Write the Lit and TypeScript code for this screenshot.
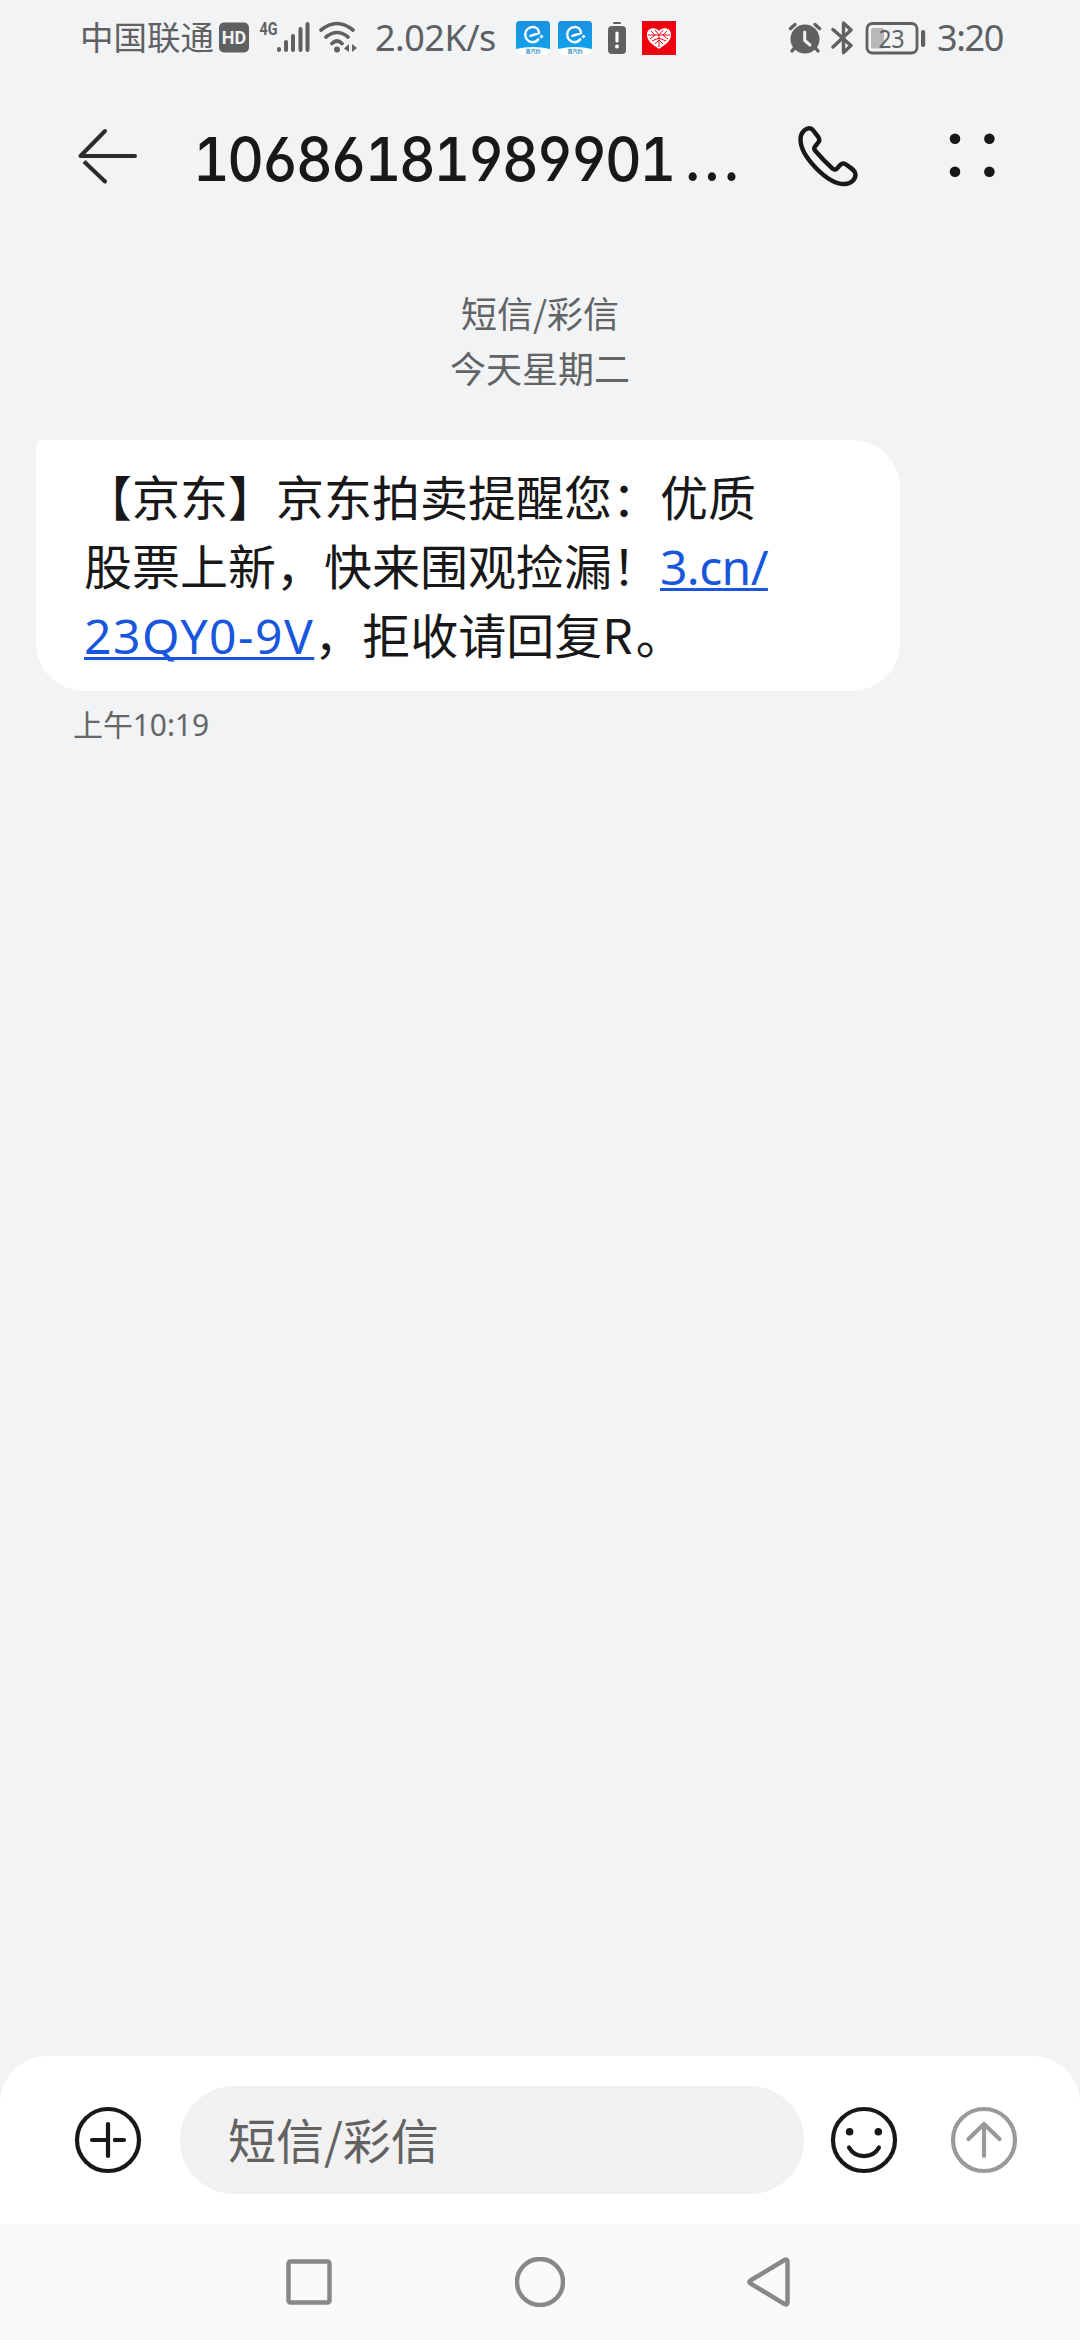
import { LitElement, html, svg, css } from "lit";
import { customElement, property } from "lit/decorators.js";

@customElement("status-bar")
class StatusBar extends LitElement {
  static styles = css`
    :host {
      display: flex;
      height: 75px;
      box-sizing: border-box;
      padding: 0 76px 2px 80px;
      align-items: center;
      color: #5f6062;
      font-family: "Noto Sans", "Noto Sans CJK SC", sans-serif;
    }
    svg { display: block; flex: none; margin-top: 2px; }
    .carrier { width: 136px; font: 400 33.5px/48px "Noto Sans CJK SC", sans-serif; white-space: nowrap; margin-top: -2px; }
    .hd { margin-left: 2px; }
    .signal { margin-left: 10px; }
    .wifi { margin-left: 8px; }
    .rate { margin-left: 17px; width: 125px; font-size: 36px; line-height: 48px; letter-spacing: -0.5px; white-space: nowrap; margin-top: 2px; }
    .app { margin-left: 16px; }
    .app + .app { margin-left: 8px; }
    .low { margin-left: 15px; }
    .heart { margin-left: 15px; }
    .right { display: flex; align-items: center; margin-left: auto; }
    .bt { margin-left: 9px; }
    .battery { margin-left: 11px; }
    .time { margin: 2px 0 0 11px; width: 67px; font-size: 36px; line-height: 48px; letter-spacing: -1.4px; white-space: nowrap; }
    .hdt { font: 700 18px "Roboto", sans-serif; fill: #f1f3f5; }
    .g4 { font: 700 18px "Roboto", sans-serif; fill: #5f6062; }
    .bat { font: 400 25px "Noto Sans", sans-serif; fill: #5f6062; }
    .apptext { font: 700 5px "Noto Sans CJK SC", sans-serif; fill: #2b8fc4; }
  `;
  private appIcon(id: string) {
    return html`<svg class="app" width="34" height="34" viewBox="0 0 34 34">
      <defs><linearGradient id=${id} x1="0" y1="0" x2="0" y2="1"><stop offset="0" stop-color="#1b8fe0" /><stop offset="1" stop-color="#0ca6ee" /></linearGradient></defs>
      <rect width="34" height="34" rx="3.500" fill="url(#${id})" />
      <path d="M0 28Q17 24 34 28V31Q34 34 31 34H3Q0 34 0 31Z" fill="#fff" />
      <path d="M14.500 14.800L23 12C23 8.200 20 6 16.800 6C12.300 6 9.200 9.500 9.200 13.500C9.200 18 12.500 21.200 16.500 21.200C19 21.200 21 20.200 22.300 18.300" fill="none" stroke="#fff" stroke-width="2.400" stroke-linecap="round" stroke-linejoin="round" />
      <path d="M25.500 13.500L27.500 15.500L25.500 17.500L23.500 15.500Z" fill="#fff" />
      <text class="apptext" x="17" y="31.900" text-anchor="middle">首汽约</text>
    </svg>`;
  }
  render() {
    return html`
      <span class="carrier">中国联通</span>
      <svg class="hd" width="31" height="31" viewBox="0 0 31 31">
        <rect x="1" y="0.500" width="30" height="30" rx="5" fill="#5f6062" />
        <text class="hdt" x="16" y="22" text-anchor="middle">HD</text>
      </svg>
      <svg class="signal" width="51" height="49" viewBox="259 12 51 49">
        <text class="g4" x="259.500" y="34" textLength="18" lengthAdjust="spacingAndGlyphs">4G</text>
        <path d="M279 48V49M286 41V49M293 35V49M300.500 28V49M307.500 23V49" stroke="#5f6062" stroke-width="4" stroke-linecap="round" />
      </svg>
      <svg class="wifi" width="40" height="33" viewBox="318 20 40 33">
        <g fill="none" stroke="#5f6062" stroke-width="3.600" stroke-linecap="round">
          <path d="M321 29Q337 16 353 29M326 36Q337 27 348 36M332 42.500Q337 37.500 342 42.500" />
        </g>
        <circle cx="337" cy="48.500" r="3" fill="#5f6062" />
        <path d="M349 43V51L344 47.500ZM352 43V51L357 47Z" fill="#5f6062" />
      </svg>
      <span class="rate">2.02K/s</span>
      ${this.appIcon("a1")}${this.appIcon("a2")}
      <svg class="low" width="20" height="34" viewBox="607 19 20 34">
        <rect x="613" y="20" width="8" height="2" rx="1" fill="#5f6062" />
        <rect x="608" y="24" width="18" height="28" rx="4" fill="#5f6062" />
        <path d="M617 31V39" stroke="#fff" stroke-width="3.200" stroke-linecap="round" />
        <circle cx="617" cy="44.500" r="2" fill="#fff" />
      </svg>
      <svg class="heart" width="34" height="34" viewBox="0 0 34 34">
        <rect width="34" height="34" fill="#ee0410" />
        <path d="M17 10C14 6 5 6 5 14C5 21 13 25 17 28C21 25 29 21 29 14C29 6 20 6 17 10Z" fill="#fff" />
        <path d="M9 10L13 14L8 18M13 9L17 14L21 9M25 10L21 14L26 18M10 20L17 17L24 20M13 23L17 19L21 23M17 14V26M6 14H28" fill="none" stroke="#ee0410" stroke-width="1" />
      </svg>
      <div class="right">
        <svg width="34" height="34" viewBox="787 19 34 34">
          <circle cx="804" cy="37" r="14.500" fill="#5f6062" />
          <path d="M789.500 26.500L794 22.500M818.500 26.500L814 22.500M793 46.500L791 49M815 46.500L817 49" stroke="#5f6062" stroke-width="3.400" stroke-linecap="round" />
          <path d="M803.700 30V38.500L809 43" fill="none" stroke="#f1f3f5" stroke-width="3" stroke-linecap="round" stroke-linejoin="round" />
        </svg>
        <svg class="bt" width="23" height="36" viewBox="831 18 23 36">
          <path d="M833 27.500L851 43.500L843.500 50.500V21L851 28L833 45" fill="none" stroke="#5f6062" stroke-width="3.400" stroke-linecap="round" stroke-linejoin="round" />
        </svg>
        <svg class="battery" width="61" height="34" viewBox="865 19 61 34">
          <rect x="871" y="26" width="13" height="20.500" rx="2" fill="#b7b8ba" />
          <rect x="867" y="21.500" width="50" height="29.500" rx="5.500" fill="none" stroke="#5f6062" stroke-width="2.800" />
          <rect x="921" y="28" width="4.200" height="17" rx="2" fill="#5f6062" />
          <text class="bat" x="891.500" y="45.500" text-anchor="middle" textLength="26" lengthAdjust="spacingAndGlyphs">23</text>
        </svg>
        <span class="time">3:20</span>
      </div>
    `;
  }
}

@customElement("chat-header")
class ChatHeader extends LitElement {
  @property() number = "";
  static styles = css`
    :host { display: flex; height: 161px; box-sizing: border-box; padding: 0 82px 0 76px; align-items: center; }
    svg { display: block; flex: none; }
    h1 {
      margin: 6px 0 0 53px;
      width: 544px;
      height: 80px;
      font: 500 61px/80px "Inter", sans-serif;
      font-feature-settings: "tnum" 1, "ss01" 1, "cv03" 1, "cv04" 1;
      letter-spacing: -2.600px;
      color: #181818;
      white-space: nowrap;
      transform: scaleX(0.93);
      transform-origin: left center;
    }
    .phone { margin-left: 59px; }
    .more { margin-left: 88px; }
    .dots { letter-spacing: 4.500px; margin-left: 12px; }
  `;
  render() {
    return html`
      <svg width="64" height="60" viewBox="76 126 64 60" fill="none" stroke="#2b2b2b" stroke-width="4" stroke-linecap="round">
        <path d="M135 156H80.500L105 131" stroke-linejoin="round" />
        <path d="M84 161.500L105 181.500" stroke-linecap="butt" /><path d="M104.500 181L105 181.400" />
      </svg>
      <h1>${this.number}<span class="dots">...</span></h1>
      <svg class="phone" width="64" height="64" viewBox="796 124 64 64" fill="none" stroke="#181818" stroke-width="4.400">
        <path d="M808.900 128.200C806 128.200 800.500 132 800.500 139.500C800.500 156 827 184 844.400 184C851 184 855.500 179.500 855.500 174.500C855.500 171 852.500 169 846.500 164.800C844.500 163.300 842 163.300 840.300 164.800L837 168.500C835.800 169.800 834.200 169.800 832.800 168.800C827.500 164 820 156.500 815 150.500C814 149 814 147.500 815.200 146.200L818 142.800C819.800 141 819.800 139.500 818.500 137.300L813.300 130.500C812 128.800 810.500 128.200 808.900 128.200Z" />
      </svg>
      <svg class="more" width="50" height="50" viewBox="948 131 50 50" fill="#181818">
        <circle cx="955" cy="138.700" r="5.300" /><circle cx="989.400" cy="138.700" r="5.300" />
        <circle cx="955" cy="171.700" r="5.300" /><circle cx="989.400" cy="171.700" r="5.300" />
      </svg>
    `;
  }
}

@customElement("message-bubble")
class MessageBubble extends LitElement {
  @property() time = "";
  static styles = css`
    :host { display: block; padding: 0 36px; }
    .bubble {
      width: 864px;
      height: 251px;
      box-sizing: border-box;
      padding: 21px 48px 0;
      border-radius: 6px 48px 48px 48px;
      background: #fff;
      color: #181818;
      font: 400 48px/69px "Noto Sans CJK SC", sans-serif;
      text-spacing-trim: space-all;
    }
    .line { display: block; height: 69px; white-space: nowrap; }
    a {
      font-family: "Noto Sans", sans-serif;
      color: #1857dc;
      text-decoration: underline;
      text-decoration-thickness: 3px;
      text-underline-offset: 3px;
      text-decoration-skip-ink: none;
    }
    .host { letter-spacing: -0.600px; }
    .path { letter-spacing: 1.500px; }
    .latin { letter-spacing: 3px; }
    .time { margin: 10px 0 0 37px; color: #666; font: 400 30px/48px "Noto Sans", "Noto Sans CJK SC", sans-serif; letter-spacing: -0.100px; }
  `;
  render() {
    return html`
      <div class="bubble">
        <span class="line">【京东】京东拍卖提醒您：优质</span>
        <span class="line">股票上新，快来围观捡漏！<a class="host">3.cn/</a></span>
        <span class="line"><a class="path">23QY0-9V</a>，拒收请回复<span class="latin">R</span>。</span>
      </div>
      <div class="time">${this.time}</div>
    `;
  }
}

@customElement("compose-bar")
class ComposeBar extends LitElement {
  static styles = css`
    :host {
      display: flex;
      align-items: center;
      height: 168px;
      box-sizing: border-box;
      padding: 0 62px 0 74px;
      border-radius: 48px 48px 0 0;
      background: #fff;
    }
    svg { display: block; flex: none; fill: none; stroke: #181818; stroke-width: 4.200; stroke-linecap: round; stroke-linejoin: round; }
    .field {
      flex: 1;
      height: 108px;
      box-sizing: border-box;
      margin: 0 26px 0 38px;
      padding-left: 48px;
      border-radius: 54px;
      background: #f1f1f1;
      color: #626262;
      font: 400 48px/104px "Noto Sans CJK SC", sans-serif;
      white-space: nowrap;
    }
    .eye { fill: #181818; stroke: none; }
    .send { margin-left: 52px; stroke: #999; }
  `;
  render() {
    return html`
      <svg width="68" height="68" viewBox="74 2106 68 68">
        <circle cx="108" cy="2140" r="31" /><path d="M108 2124V2156M92 2140H108M124 2140H115" /><path d="M113.500 2140H118" stroke-linecap="butt" />
      </svg>
      <div class="field">短信/彩信</div>
      <svg width="68" height="68" viewBox="830 2106 68 68">
        <circle cx="864" cy="2140" r="31" /><circle class="eye" cx="849.600" cy="2131.700" r="3.800" /><circle class="eye" cx="878.300" cy="2131.700" r="3.800" />
        <path d="M849 2147.500C855.500 2159 872.500 2159 879 2147.500" />
      </svg>
      <svg class="send" width="68" height="68" viewBox="950 2106 68 68">
        <circle cx="984" cy="2140" r="31" /><path d="M984 2156V2124M968.500 2139L984 2124L999.500 2139" />
      </svg>
    `;
  }
}

@customElement("system-nav")
class SystemNav extends LitElement {
  static styles = css`
    :host { display: flex; justify-content: center; align-items: center; gap: 181px; height: 116px; background: #fafafa; }
    svg { display: block; fill: none; stroke: #888; stroke-width: 4.500; stroke-linejoin: round; }
  `;
  render() {
    const shapes = [
      svg`<rect x="4.500" y="4.500" width="41" height="41" rx="2" />`,
      svg`<circle cx="25" cy="25" r="23" />`,
      svg`<path d="M4.500 23.500L38.500 3C40 2 41.500 3 41.500 4.500V45.500C41.500 47 40 48 38.500 47L4.500 26.500C3 25.500 3 24.500 4.500 23.500Z" />`,
    ];
    return shapes.map((s) => html`<svg width="50" height="50" viewBox="0 0 50 50">${s}</svg>`);
  }
}

@customElement("app-root")
class AppRoot extends LitElement {
  static styles = css`
    :host { display: flex; flex-direction: column; width: 1080px; height: 2340px; overflow: hidden; background: #f1f3f5; }
    .meta { box-sizing: border-box; padding-top: 49px; height: 204px; text-align: center; color: #626365; font: 400 36px/55px "Noto Sans CJK SC", sans-serif; }
    .spacer { flex: 1; }
  `;
  render() {
    return html`
      <status-bar></status-bar>
      <chat-header number="10686181989901"></chat-header>
      <div class="meta"><div>短信/彩信</div><div>今天星期二</div></div>
      <message-bubble time="上午10:19"></message-bubble>
      <div class="spacer"></div>
      <compose-bar></compose-bar>
      <system-nav></system-nav>
    `;
  }
}
